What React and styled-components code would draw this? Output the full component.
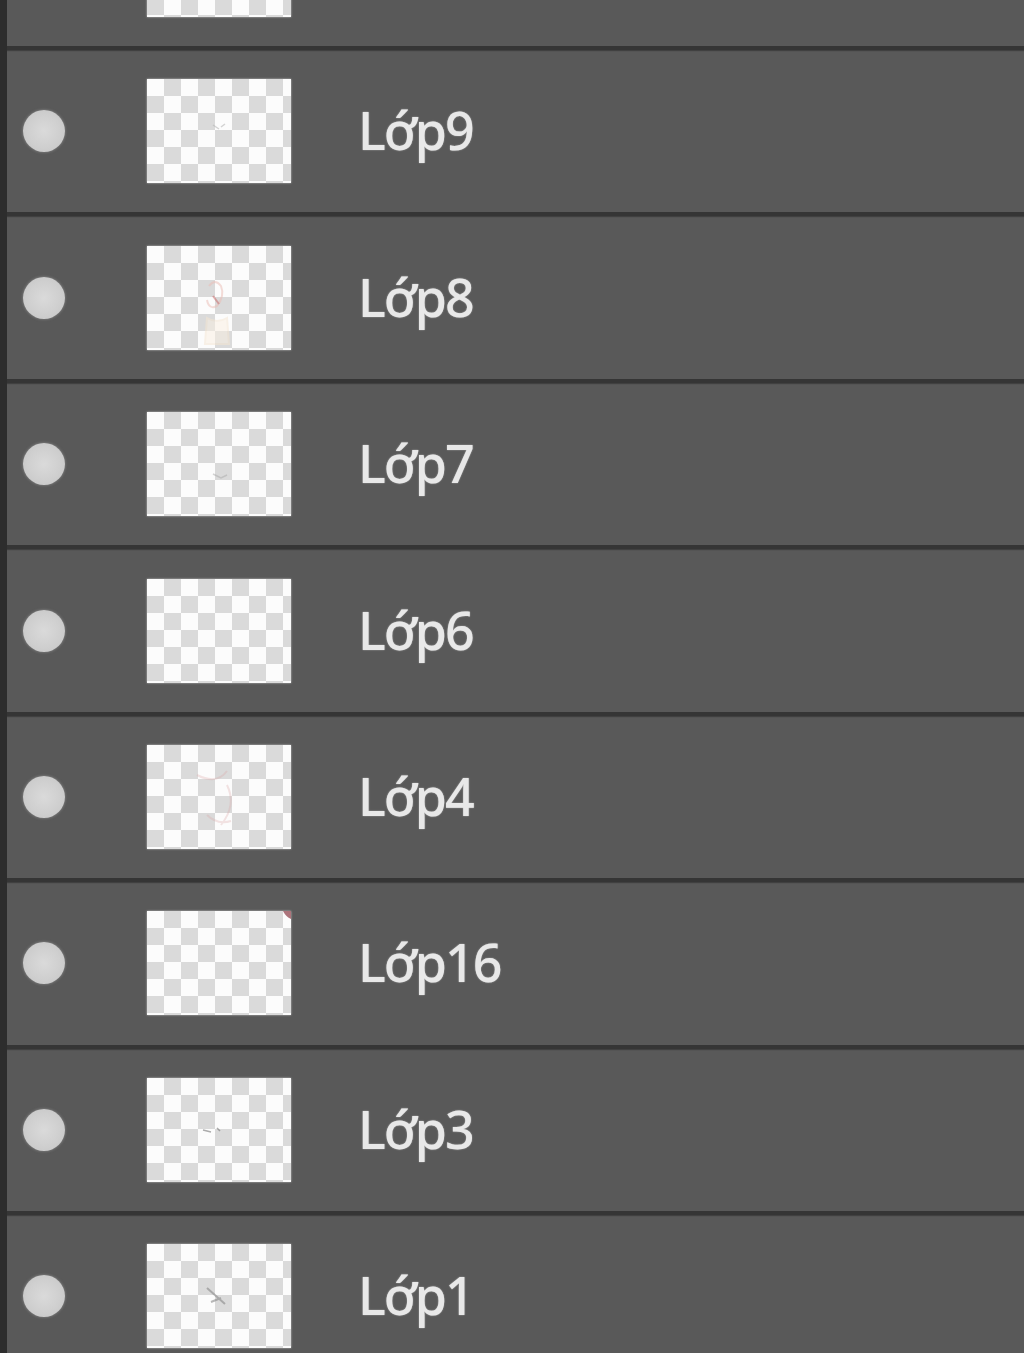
import React from "react";
import styled, { createGlobalStyle } from "styled-components";

const Global = createGlobalStyle`
  html, body { margin: 0; padding: 0; background: #595959; overflow: hidden; }
  body { font-family: "Noto Sans", "Open Sans", sans-serif; }
`;

const Panel = styled.div`
  width: 1024px;
  height: 1353px;
  overflow: hidden;
  background: #595959;
  border-left: 7px solid #2d2d2d;
  box-sizing: border-box;
`;

const List = styled.div`
  display: flex;
  flex-direction: column;
  margin-top: -116.4px;
`;

const Row = styled.div`
  display: flex;
  align-items: center;
  height: 166.43px;
  box-sizing: border-box;
  border-bottom: 4px solid #353535;
  box-shadow: 0 1px 1px rgba(40, 40, 40, 0.5);
  flex-shrink: 0;
`;

const Eye = styled.div`
  width: 42px;
  height: 42px;
  margin-left: 16px;
  border-radius: 50%;
  background: radial-gradient(circle, #dadada 0%, #cfcfcf 55%, #c4c4c4 100%);
  box-shadow: 0 0 3px rgba(200, 200, 200, 0.5);
  flex-shrink: 0;
`;

const Thumb = styled.div`
  position: relative;
  width: 144px;
  height: 104px;
  margin-left: 82px;
  flex-shrink: 0;
  background-color: #fcfcfc;
  background-image: linear-gradient(45deg, #dadada 25%, transparent 25%, transparent 75%, #dadada 75%),
    linear-gradient(45deg, #dadada 25%, transparent 25%, transparent 75%, #dadada 75%);
  background-size: 34px 34px;
  background-position: 0 0, 17px 17px;
  box-shadow: 0 0 2px rgba(240, 240, 240, 0.7);
`;

const Mark = styled.svg`
  position: absolute;
  inset: 0;
  width: 100%;
  height: 100%;
`;

const Label = styled.span`
  margin-left: 67px;
  font-family: "Noto Sans", "Open Sans", sans-serif;
  font-size: 52px;
  font-weight: 500;
  letter-spacing: -2px;
  color: #e8e8e8;
  text-shadow: 0 0 1.5px rgba(232, 232, 232, 0.7);
  line-height: 1;
  margin-top: -2px;
`;

const marks = {
  top: null,
  "Lớp9": <path d="M66 46 l6 4 M74 48 l4 -3" stroke="#b8b8b8" strokeWidth="1.5" fill="none" opacity="0.6" />,
  "Lớp8": (
    <g opacity="0.5" fill="none" strokeWidth="2">
      <path d="M62 40 q6 -8 12 0 q4 10 -4 20 q-8 4 -10 -6" stroke="#ecbcb4" />
      <path d="M66 50 l6 8" stroke="#c86060" />
      <path d="M60 72 q10 6 20 0 l2 26 h-24 z" stroke="#f6e6d2" fill="#fbf0e2" />
    </g>
  ),
  "Lớp7": <path d="M66 62 l8 4 l6 -3" stroke="#aaaaaa" strokeWidth="1.5" fill="none" opacity="0.5" />,
  "Lớp6": null,
  "Lớp4": (
    <g opacity="0.3" fill="none" strokeWidth="2" stroke="#d9a4a4">
      <path d="M50 30 q20 10 30 -4 M80 40 q10 20 -6 40 M60 70 q10 10 24 6" />
    </g>
  ),
  "Lớp16": <path d="M136 0 h8 v8 q-5 -2 -8 -8 z" fill="#8a3a44" opacity="0.7" />,
  "Lớp3": <path d="M56 52 l8 2 M70 50 l3 3" stroke="#777" strokeWidth="1.5" fill="none" opacity="0.6" />,
  "Lớp1": <path d="M60 44 l18 16 M64 58 l10 -4" stroke="#888" strokeWidth="2" fill="none" opacity="0.6" />,
};

const layers = ["top", "Lớp9", "Lớp8", "Lớp7", "Lớp6", "Lớp4", "Lớp16", "Lớp3", "Lớp1"];

export default function App() {
  return (
    <>
      <Global />
      <Panel>
        <List>
          {layers.map((name) => (
            <Row key={name}>
              <Eye />
              <Thumb>
                {marks[name] && (
                  <Mark viewBox="0 0 144 104" preserveAspectRatio="none">
                    {marks[name]}
                  </Mark>
                )}
              </Thumb>
              {name !== "top" && <Label>{name}</Label>}
            </Row>
          ))}
        </List>
      </Panel>
    </>
  );
}
